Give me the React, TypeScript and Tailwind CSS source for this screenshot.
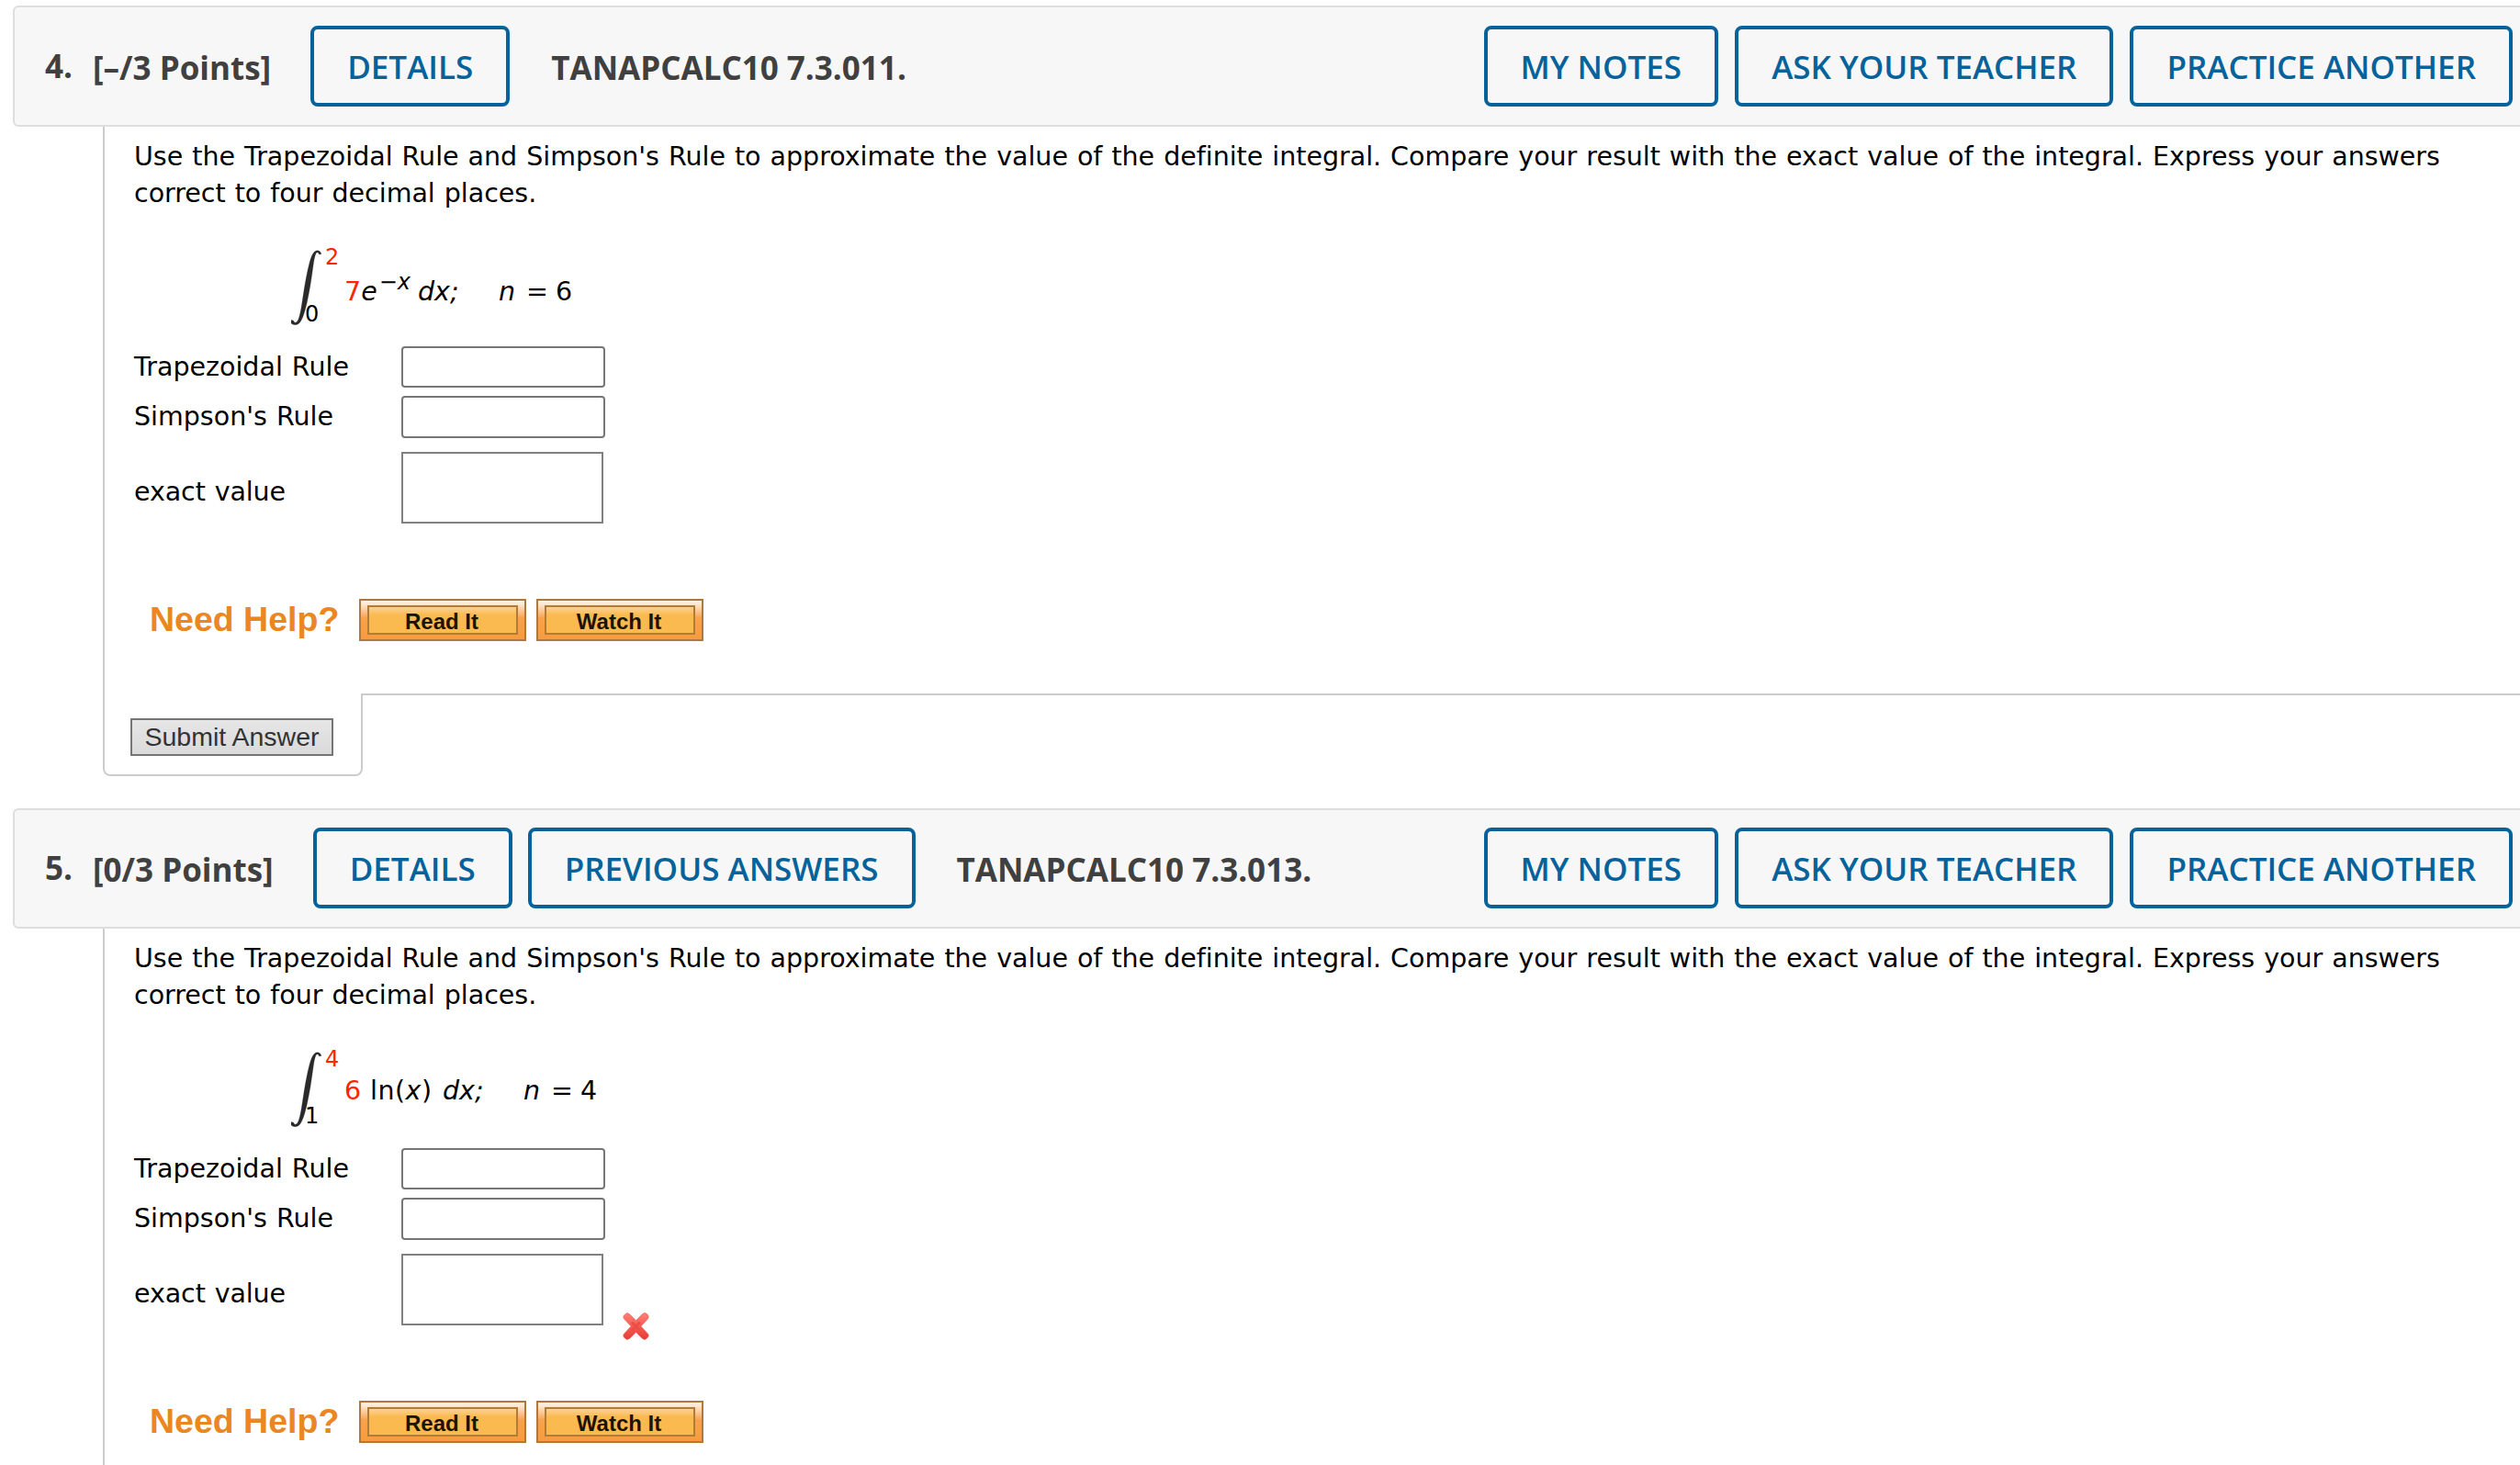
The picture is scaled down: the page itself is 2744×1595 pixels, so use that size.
import React, { useState } from "react";

function Button({ label }: { label: string }) {
  return (
    <button className="h-[88px] px-[36px] border-4 border-[#05629a] rounded-lg text-[#05629a] text-[35px] font-semibold leading-none pt-[1px] whitespace-nowrap">
      {label}
    </button>
  );
}

function HelpButton({ label }: { label: string }) {
  return (
    <button className="flex h-[46px] w-[182px] border-2 border-[#b0783a] bg-linear-to-b from-[#fdeede] from-5% via-[#f8a24a] via-45% to-[#f89b3e] px-[7px] py-[5px]">
      <span className="flex-1 h-[32px] border-2 border-[#b07c38] bg-linear-to-b from-[#fcd294] to-[#fbba50] to-30% text-[#1c1402] text-[24px] font-bold leading-[31px] text-center pr-[2px]">
        {label}
      </span>
    </button>
  );
}

function Integral() {
  return (
    <svg width="33" height="82" viewBox="0 0 33 82" className="mt-1 shrink-0">
      <path
        d="M33 4.500 C32 1 28.500 -0.500 25.500 2 C21.500 5.500 19.200 16 15.500 35 C12 55 10.500 72 7 77.500 C5 80 3.500 79.500 2.500 77 L0 76.500 L0 80 C3 82.500 7 82.500 10 78.500 C14.500 72 17.500 58 21 38 C24 20 24.500 9 27 4 C28.500 1.800 29.500 3 30.500 5 Z"
        fill="#2a2a2a"
        stroke="#2a2a2a"
        strokeOpacity="0.3"
        strokeWidth="0.8"
      />
    </svg>
  );
}

function WrongMark() {
  return (
    <svg width="31" height="32" viewBox="0 0 31 32" className="ml-5 -mb-[17px]">
      <defs>
        <linearGradient id="wrong" x1="0" y1="0" x2="0" y2="1">
          <stop offset="0" stopColor="#ff8078" />
          <stop offset="1" stopColor="#e83a34" />
        </linearGradient>
      </defs>
      <path
        d="M6 1.500 Q7.500 1.500 9 3 L15.500 9.500 L22 3 Q25 0 27.500 2.500 L28.500 3.500 Q30.500 6 28 8.500 L21 16 L28 23.500 Q30.500 26 28.500 28 L27 29.500 Q24.500 31.500 22 29 L15.500 22.500 L9 29 Q6 31.500 4 29.500 L2.500 28 Q0.500 26 3 23.500 L10 16 L3 8.500 Q0.500 6 2.500 4 L3.500 3 Q4.500 1.500 6 1.500 Z"
        fill="url(#wrong)"
        stroke="#f2645c"
        strokeOpacity="0.5"
      />
      <path d="M12 12.500 L19 19.500 M19 12.500 L12 19.500" stroke="#ee4c45" strokeWidth="3" strokeLinecap="round" />
    </svg>
  );
}

function Limits({ upper, lower }: { upper: string; lower: string }) {
  return (
    <div className="-ml-[18px] w-[43px] h-[86px] flex flex-col justify-between text-[24px] leading-none">
      <span className="pl-[22px] text-[#ff2600]">{upper}</span>
      <span>{lower}</span>
    </div>
  );
}

function Steps({ n }: { n: string }) {
  return (
    <>
      <i className="mr-[12px]">n</i>
      <span className="mr-[8px]">=</span>
      <span>{n}</span>
    </>
  );
}

const questions = [
  {
    number: "4.",
    points: "[–/3 Points]",
    buttons: ["DETAILS"],
    title: "TANAPCALC10 7.3.011.",
    header: "mt-[6px] h-[132px]",
    limits: ["2", "0"],
    formula: (
      <div className="flex items-baseline mt-[30px]">
        <span className="text-[#ff2600]">7</span>
        <i>e</i>
        <span className="text-[24px] leading-none relative -top-3 ml-[2px]">
          −<i>x</i>
        </span>
        <i className="ml-[8px] w-[88px]">dx;</i>
        <Steps n="6" />
      </div>
    ),
    wrong: false,
    submit: true,
  },
  {
    number: "5.",
    points: "[0/3 Points]",
    buttons: ["DETAILS", "PREVIOUS ANSWERS"],
    title: "TANAPCALC10 7.3.013.",
    header: "mt-[35px] h-[131px] pb-[1px]",
    limits: ["4", "1"],
    formula: (
      <div className="flex items-baseline mt-[27px]">
        <span className="text-[#ff2600] w-[28px]">6</span>
        <span className="w-[79px] tracking-[0.5px]">
          ln(<i>x</i>)
        </span>
        <i className="w-[88px]">dx;</i>
        <Steps n="4" />
      </div>
    ),
    wrong: true,
    submit: false,
  },
];

function Question({ question }: { question: (typeof questions)[number] }) {
  const [trapezoidal, setTrapezoidal] = useState("");
  const [simpson, setSimpson] = useState("");

  return (
    <section>
      <header
        className={`${question.header} ml-[14px] pl-[33px] pr-[8px] flex items-center bg-[#f7f7f7] border-2 border-r-0 border-[#dedede] rounded-l-md font-['Open_Sans',sans-serif]`}
      >
        <h2 className="w-[52px] pb-[1px] text-[35px] font-bold text-[#404040] leading-none">{question.number}</h2>
        <h2 className="mr-[43px] pt-[2px] text-[35px] font-bold text-[#404040] leading-none whitespace-nowrap">{question.points}</h2>
        <div className="flex gap-[17px]">
          {question.buttons.map((label) => (
            <Button key={label} label={label} />
          ))}
        </div>
        <h2 className="ml-[45px] pt-[2px] text-[35px] font-bold text-[#404040] leading-none whitespace-nowrap">{question.title}</h2>
        <div className="flex gap-[18px] ml-auto">
          <Button label="MY NOTES" />
          <Button label="ASK YOUR TEACHER" />
          <Button label="PRACTICE ANOTHER" />
        </div>
      </header>

      <div className="ml-[112px] h-[617px] border-l-2 border-[#ccc] pl-[31px] pt-[13px] text-[28.5px] leading-[40px] [word-spacing:1px] text-black">
        <p className="pl-[1px] tracking-[-0.02px]">
          Use the Trapezoidal Rule and Simpson's Rule to approximate the value of the definite integral. Compare your result with the exact value of the integral. Express your answers
          <br />
          correct to four decimal places.
        </p>

        <div className="flex mt-[37px] ml-[172px] h-[86px]">
          <Integral />
          <Limits upper={question.limits[0]} lower={question.limits[1]} />
          {question.formula}
        </div>

        <form onSubmit={(e) => e.preventDefault()}>
          <div className="flex items-center mt-[23px]">
            <label className="w-[292px] pl-[1px]">Trapezoidal Rule</label>
            <input
              value={trapezoidal}
              onChange={(e) => setTrapezoidal(e.target.value)}
              className="w-[222px] h-[45px] border-2 border-[#767676] rounded-[4px] px-2"
            />
          </div>
          <div className="flex items-center mt-[9px]">
            <label className="w-[292px] pl-[1px]">Simpson's Rule</label>
            <input
              value={simpson}
              onChange={(e) => setSimpson(e.target.value)}
              className="w-[222px] h-[46px] border-2 border-[#767676] rounded-[4px] px-2"
            />
          </div>
          <div className="flex items-end mt-[15px] h-[78px]">
            <label className="w-[292px] pl-[1px] mb-[14px] tracking-[-0.1px]">exact value</label>
            <div className="w-[220px] h-[78px] border-2 border-[#808080]"></div>
            {question.wrong && <WrongMark />}
          </div>
        </form>

        <div className="flex mt-[82px] pl-[18px] font-['Liberation_Sans',Arial,sans-serif] [word-spacing:0]">
          <span className="w-[228px] text-[37.5px] leading-[44px] font-bold text-[#ea8722]">Need Help?</span>
          <div className="flex gap-[11px]">
            <HelpButton label="Read It" />
            <HelpButton label="Watch It" />
          </div>
        </div>
      </div>

      {question.submit && (
        <div className="ml-[112px] flex items-start">
          <div className="w-[283px] h-[90px] border-2 border-t-0 border-[#ccc] rounded-b-lg pl-[28px] pt-[27px]">
            <button className="block w-[221px] h-[41px] border-2 border-[#757575] bg-linear-to-b from-[#e6e6e6] to-[#dadada] text-[#333] text-[28.5px] leading-[37px] whitespace-nowrap font-['Liberation_Sans',Arial,sans-serif]">
              Submit Answer
            </button>
          </div>
          <div className="flex-1 border-t-2 border-[#ccc]"></div>
        </div>
      )}
    </section>
  );
}

export default function App() {
  return (
    <main className="h-[1595px] overflow-hidden flow-root bg-white font-['DejaVu_Sans',Verdana,sans-serif]">
      {questions.map((question) => (
        <Question key={question.number} question={question} />
      ))}
    </main>
  );
}
